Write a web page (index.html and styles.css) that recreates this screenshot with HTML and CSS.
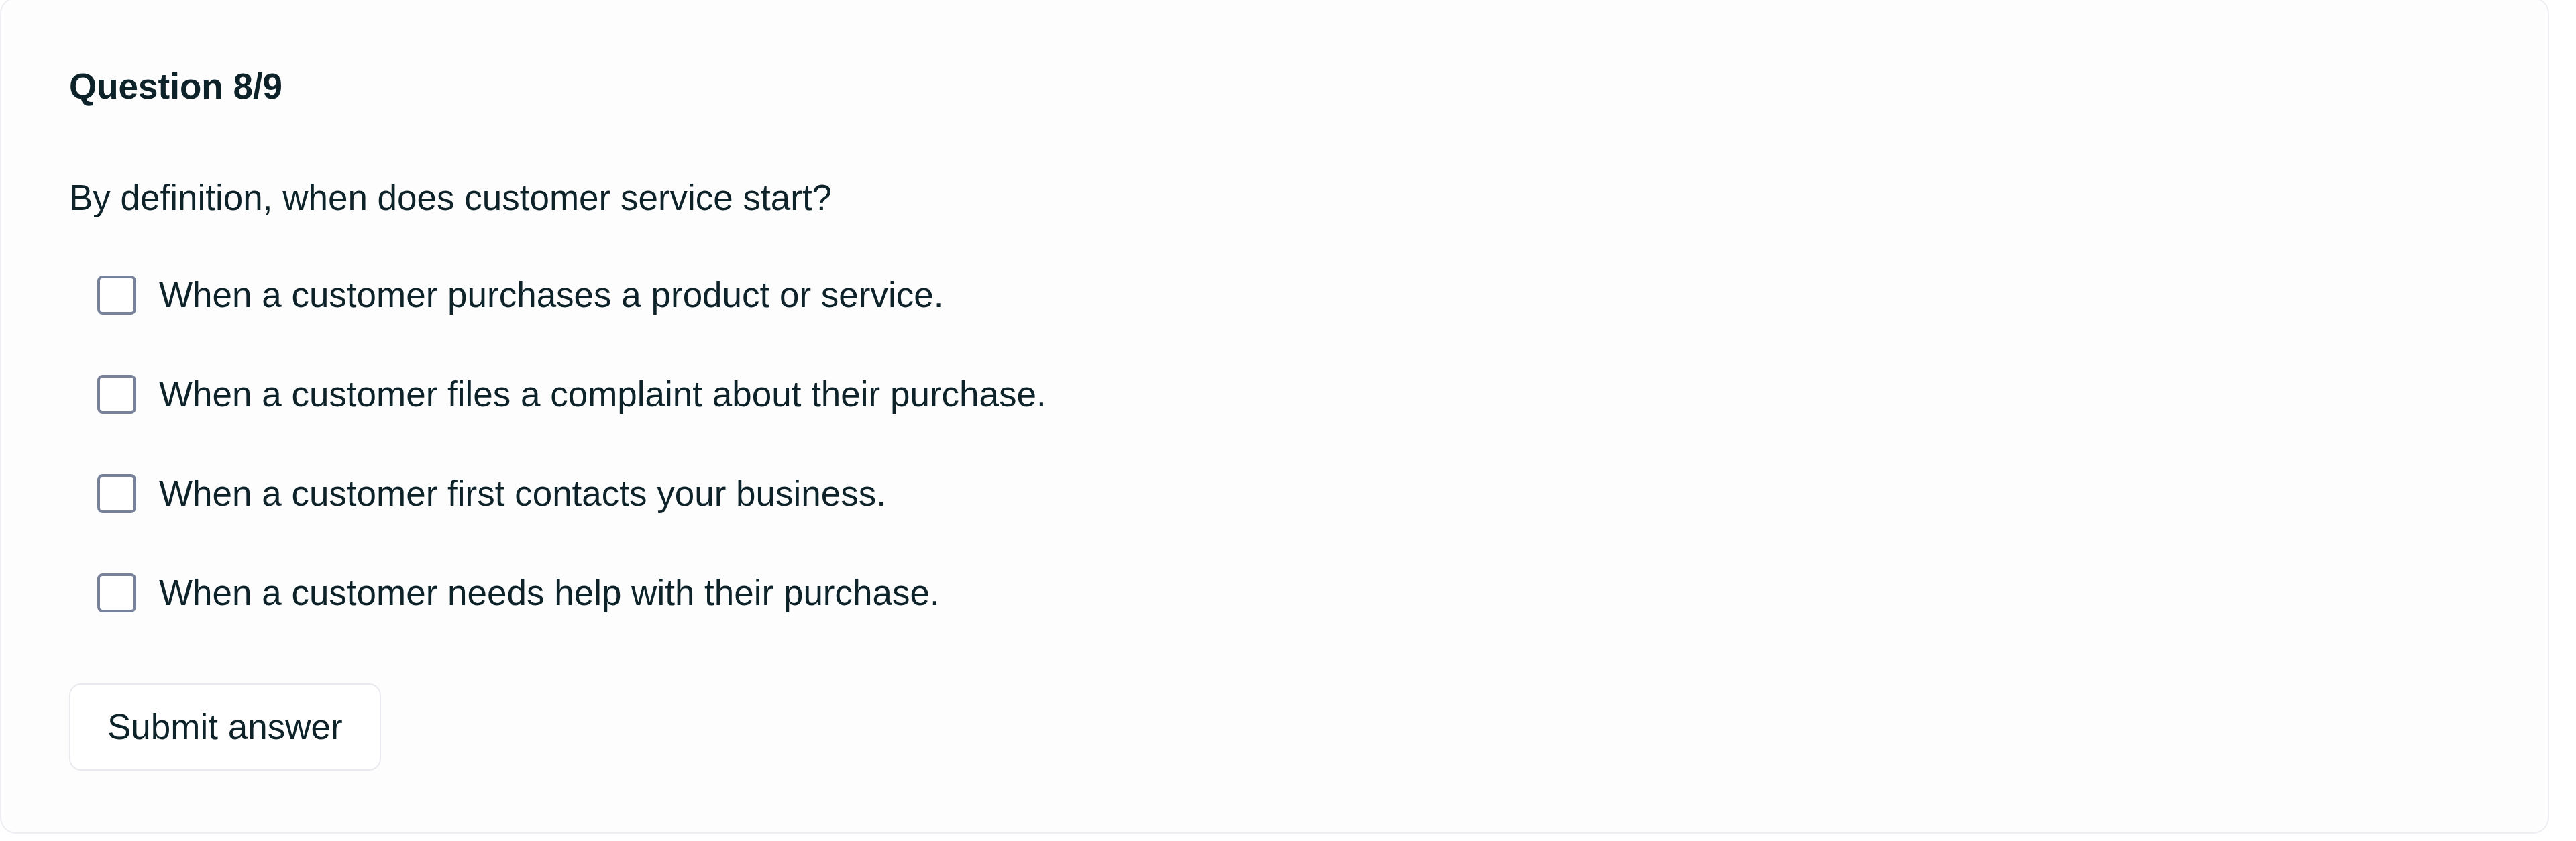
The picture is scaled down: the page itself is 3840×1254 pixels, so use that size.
FILE: index.html
```html
<!doctype html>
<html lang="en">
  <head>
    <meta charset="UTF-8" />
    <title>Quiz question</title>
    <link rel="stylesheet" href="styles.css">
  </head>
  <body>
    <div class="quiz-card">
      <h2 class="quiz-count">Question 8/9</h2>

      <p class="quiz-prompt">By definition, when does customer service start?</p>

      <ul class="quiz-options">
        <li class="quiz-option">
          <span class="check-box"></span>
          <span>When a customer purchases a product or service.</span>
        </li>
        <li class="quiz-option">
          <span class="check-box"></span>
          <span>When a customer files a complaint about their purchase.</span>
        </li>
        <li class="quiz-option">
          <span class="check-box"></span>
          <span>When a customer first contacts your business.</span>
        </li>
        <li class="quiz-option">
          <span class="check-box"></span>
          <span>When a customer needs help with their purchase.</span>
        </li>
      </ul>

      <button class="submit-btn">Submit answer</button>
    </div>
  </body>
</html>
```

FILE: styles.css
```css
  body {
    font-family: "Liberation Sans", Arial, sans-serif;
    background: #ffffff;
    color: #0d2329;
    margin: 0;
    padding: 0;
  }

  .quiz-card {
    width: 3800px;
    box-sizing: border-box;
    margin-top: -4px; /* top edge sits just above the window */
    padding: 92px 101px 92px;
    border: 2px solid #eceef2;
    border-radius: 24px;
    background: #fdfdfe;
    font-size: 53px;
    line-height: 78px;
  }

  .quiz-count {
    font-size: 53px;
    font-weight: 700;
    margin: 0;
  }

  .quiz-prompt {
    margin: 88px 0 0;
  }

  .quiz-options {
    list-style: none;
    margin: 67px 0 0;
    padding: 0 0 0 42px;
    display: flex;
    flex-direction: column;
    gap: 70px;
  }

  .quiz-option {
    display: flex;
    align-items: center;
    gap: 34px;
  }

  .check-box {
    width: 58px;
    height: 58px;
    box-sizing: border-box;
    border: 4px solid #77829a;
    border-radius: 8px;
    background: #fff;
    flex-shrink: 0;
  }

  .submit-btn {
    margin-top: 96px;
    font-family: "Liberation Sans", Arial, sans-serif;
    font-size: 53px;
    line-height: 78px;
    color: #0d2329;
    padding: 24px 55px;
    border: 2px solid #e9eaef;
    border-radius: 18px;
    background: #fff;
    cursor: pointer;
  }
```
